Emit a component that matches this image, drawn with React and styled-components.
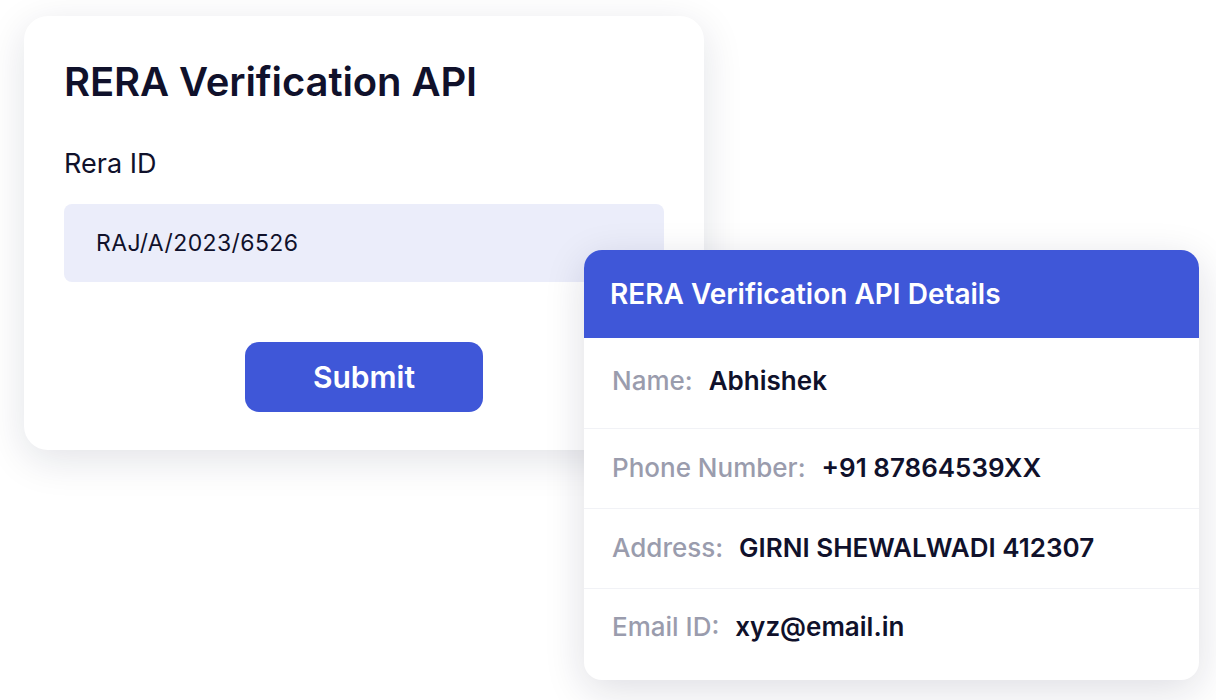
import React from 'react';
import styled, { createGlobalStyle } from 'styled-components';

const GlobalStyle = createGlobalStyle`
  * { box-sizing: border-box; }
  body {
    margin: 0;
    background: #ffffff;
    font-family: Inter, "Noto Sans", sans-serif;
    -webkit-font-smoothing: antialiased;
  }
`;

const details = [
  { label: 'Name:', value: 'Abhishek', height: 91, shift: 6 },
  { label: 'Phone Number:', value: '+91 87864539XX', height: 80, shift: 2 },
  { label: 'Address:', value: 'GIRNI SHEWALWADI 412307', height: 80, shift: 2 },
  { label: 'Email ID:', value: 'xyz@email.in', height: 91, shift: 16 },
];

const App = () => (
  <>
    <GlobalStyle />
    <Stage>
      <FormCard>
        <Title>RERA Verification API</Title>
        <FieldLabel>Rera ID</FieldLabel>
        <InputBox>RAJ/A/2023/6526</InputBox>
        <ButtonRow>
          <SubmitButton type="button">Submit</SubmitButton>
        </ButtonRow>
      </FormCard>

      <DetailsCard>
        <DetailsHeader>RERA Verification API Details</DetailsHeader>
        {details.map((d) => (
          <DetailRow key={d.label} $height={d.height} $shift={d.shift}>
            <DetailLabel>{d.label}</DetailLabel>
            <DetailValue>{d.value}</DetailValue>
          </DetailRow>
        ))}
      </DetailsCard>
    </Stage>
  </>
);

const Stage = styled.div`
  position: relative;
  width: 1216px;
  height: 700px;
  padding: 16px 0 0 24px;
`;

const FormCard = styled.div`
  width: 680px;
  height: 434px;
  background: #ffffff;
  border-radius: 24px;
  padding: 38px 40px 0 40px;
  box-shadow: 0 10px 40px rgba(20, 24, 60, 0.12);
  display: flex;
  flex-direction: column;
`;

const Title = styled.h1`
  margin: 0;
  font-size: 40px;
  font-weight: 600;
  line-height: 56px;
  color: #10112b;
  letter-spacing: -0.1px;
`;

const FieldLabel = styled.div`
  margin-top: 38px;
  font-size: 27px;
  line-height: 32px;
  font-weight: 400;
  color: #10112b;
`;

const InputBox = styled.div`
  margin-top: 24px;
  height: 78px;
  background: #ebedfa;
  border-radius: 8px;
  padding: 0 32px;
  display: flex;
  align-items: center;
  font-size: 23px;
  color: #10112b;
  letter-spacing: 0.4px;
`;

const ButtonRow = styled.div`
  margin-top: 60px;
  display: flex;
  justify-content: center;
`;

const SubmitButton = styled.button`
  width: 238px;
  height: 70px;
  border: none;
  border-radius: 14px;
  background: #3f57d8;
  color: #ffffff;
  font-family: Inter, "Noto Sans", sans-serif;
  font-size: 30px;
  font-weight: 600;
  cursor: pointer;
`;

const DetailsCard = styled.div`
  position: absolute;
  left: 584px;
  top: 250px;
  width: 615px;
  height: 430px;
  background: #ffffff;
  border-radius: 18px;
  overflow: hidden;
  box-shadow: 0 10px 40px rgba(20, 24, 60, 0.14);
  display: flex;
  flex-direction: column;
`;

const DetailsHeader = styled.div`
  height: 88px;
  flex-shrink: 0;
  background: #3f57d8;
  color: #ffffff;
  font-size: 28px;
  font-weight: 600;
  display: flex;
  align-items: center;
  padding: 0 26px;
`;

const DetailRow = styled.div`
  height: ${(p) => p.$height}px;
  flex-shrink: 0;
  display: flex;
  align-items: center;
  gap: 16px;
  padding: 0 28px ${(p) => p.$shift}px 28px;
  font-size: 26px;
  border-bottom: 1px solid #f1f2f6;

  &:last-child {
    border-bottom: none;
  }
`;

const DetailLabel = styled.span`
  color: #9a9cad;
  font-weight: 500;
`;

const DetailValue = styled.span`
  color: #10112b;
  font-weight: 600;
`;

export default App;
